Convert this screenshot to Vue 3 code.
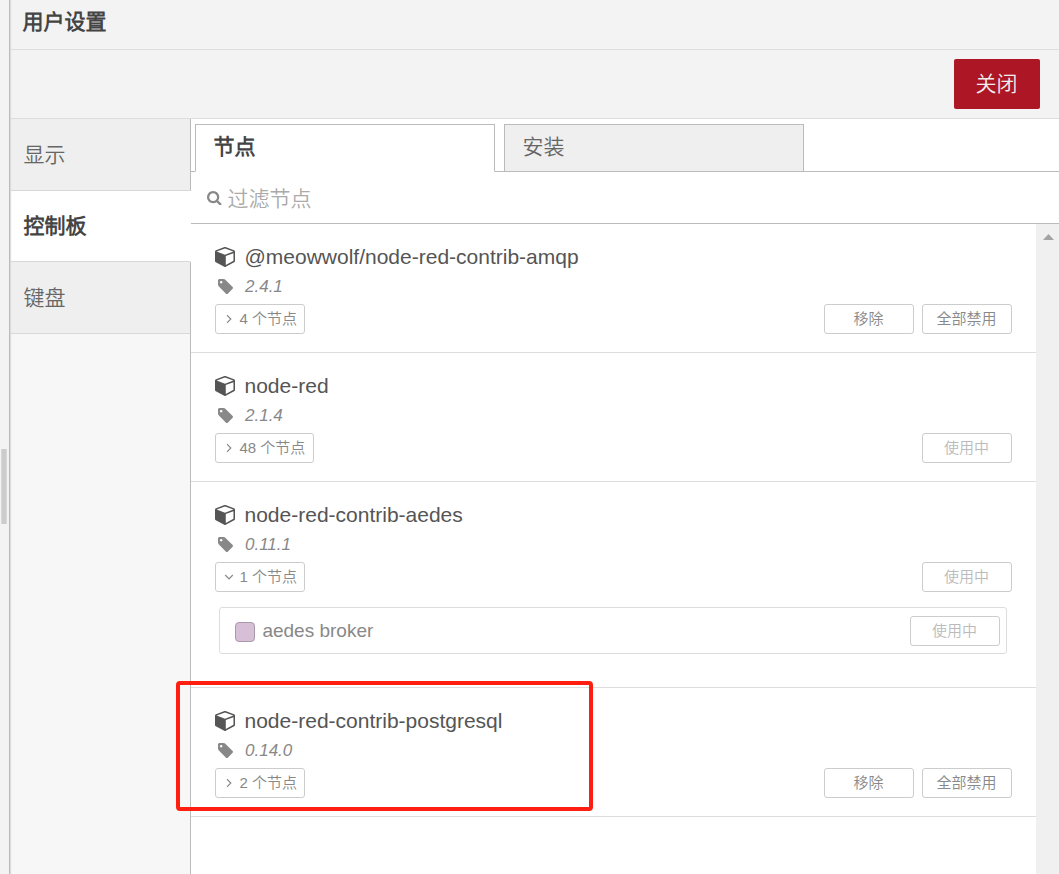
<script setup>
const menu = [
  { label: '显示', active: false },
  { label: '控制板', active: true },
  { label: '键盘', active: false },
]

const modules = [
  { name: '@meowwolf/node-red-contrib-amqp', version: '2.4.1', count: 4, actions: ['移除', '全部禁用'] },
  { name: 'node-red', version: '2.1.4', count: 48, inUse: true },
  {
    name: 'node-red-contrib-aedes',
    version: '0.11.1',
    count: 1,
    inUse: true,
    open: true,
    nodes: [{ name: 'aedes broker' }],
  },
  { name: 'node-red-contrib-postgresql', version: '0.14.0', count: 2, actions: ['移除', '全部禁用'], marked: true },
]
</script>

<template>
  <div class="app">
    <div class="separator"><span class="grip"></span></div>
    <div class="tray">
      <header class="title">用户设置</header>
      <div class="toolbar"><button class="primary">关闭</button></div>
      <div class="body">
        <nav class="menu">
          <a v-for="item in menu" :key="item.label" class="menu-item" :class="{ active: item.active }">{{ item.label }}</a>
          <div class="menu-rest"></div>
        </nav>
        <main class="content">
          <div class="tabs">
            <span class="edge"></span>
            <div class="tab active">节点</div>
            <span class="gap"></span>
            <div class="tab">安装</div>
            <span class="fill"></span>
          </div>
          <div class="search">
            <svg class="search-icon" viewBox="64 128 1664 1664"><path d="M1216 832q0-185-131.500-316.500t-316.500-131.500-316.500 131.500-131.500 316.500 131.500 316.500 316.500 131.500 316.500-131.500 131.500-316.500zm512 832q0 52-38 90t-90 38q-54 0-90-38l-343-342q-179 124-399 124-143 0-273.500-55.500t-225-150-150-225-55.500-273.500 55.500-273.500 150-225 225-150 273.500-55.500 273.500 55.500 225 150 150 225 55.500 273.500q0 220-124 399l343 343q37 37 37 90z" /></svg>
            <span>过滤节点</span>
          </div>
          <div class="scroller">
            <div class="list">
              <section v-for="m in modules" :key="m.name" class="module">
                <div class="name">
                  <svg class="cube" viewBox="0 128 1664 1664"><path d="M896 1629l640-349v-636l-640 233v752zm-64-865l698-254-698-254-698 254zm832-252v768q0 35-18 65t-49 47l-704 384q-28 16-61 16t-61-16l-704-384q-31-17-49-47t-18-65v-768q0-40 23-73t61-47l704-256q22-8 44-8t44 8l704 256q38 14 61 47t23 73z" /></svg>
                  <span>{{ m.name }}</span>
                </div>
                <div class="version">
                  <svg class="tag" viewBox="128 128 1515 1515"><path d="M576 448q0-53-37.500-90.500t-90.500-37.500-90.500 37.500-37.500 90.500 37.500 90.500 90.500 37.500 90.500-37.500 37.500-90.500zm1067 576q0 53-37 90l-491 492q-39 37-91 37-53 0-90-37l-715-716q-38-37-64.500-101t-26.500-117v-416q0-52 38-90t90-38h416q53 0 117 26.500t102 64.500l715 714q37 39 37 91z" /></svg>
                  <span>{{ m.version }}</span>
                </div>
                <div class="row">
                  <button class="btn toggle">
                    <svg class="angle" viewBox="0 0 12 12">
                      <path v-if="m.open" d="M2.200 4L6 7.800L9.800 4" />
                      <path v-else d="M4 2.200L7.800 6L4 9.800" />
                    </svg>
                    <span>{{ m.count }} 个节点</span>
                  </button>
                  <div class="actions">
                    <button v-for="a in m.actions" :key="a" class="btn">{{ a }}</button>
                    <button v-if="m.inUse" class="btn disabled">使用中</button>
                  </div>
                </div>
                <div v-if="m.nodes" class="nodes">
                  <div v-for="n in m.nodes" :key="n.name" class="node">
                    <span class="swatch"></span>
                    <span class="node-name">{{ n.name }}</span>
                    <button class="btn disabled">使用中</button>
                  </div>
                </div>
                <div v-if="m.marked" class="marker"></div>
              </section>
            </div>
            <div class="scrollbar"><span class="arrow"></span></div>
          </div>
        </main>
      </div>
    </div>
  </div>
</template>

<style>
body {
  margin: 0;
  overflow: hidden;
}
</style>

<style scoped>
* {
  box-sizing: border-box;
}
.app {
  display: flex;
  width: 1059px;
  height: 874px;
  overflow: hidden;
  background: #f3f3f3;
  font-family: "Liberation Sans", "Noto Sans CJK SC DemiLight", "Noto Sans CJK SC", sans-serif;
  font-size: 21px;
  font-weight: 350;
  color: #555;
}
svg {
  display: block;
  flex: none;
  fill: currentColor;
}
.separator {
  flex: none;
  width: 10px;
  border-right: 1px solid #bbb;
  box-shadow: 1px 0 1px #ddd;
  display: flex;
  align-items: flex-start;
  padding: 449px 0 0 1px;
  z-index: 1;
}
.grip {
  width: 6px;
  height: 75px;
  background: #ccc;
  border: 1px solid #d8d8d8;
  border-width: 0 1px;
}
.tray {
  flex: 1;
  display: flex;
  flex-direction: column;
  min-width: 0;
}
.title {
  height: 50px;
  padding-left: 12.5px;
  border-bottom: 1px solid #ddd;
  line-height: 43px;
  font-weight: 700;
  color: #444;
}
.toolbar {
  height: 69px;
  padding: 9px 19px 0 0;
  border-bottom: 1px solid #ddd;
  display: flex;
  justify-content: flex-end;
}
.primary {
  width: 86px;
  height: 50px;
  padding: 0 1px 0 0;
  border: 0;
  border-radius: 2px;
  background: #ad1625;
  color: #eee;
  font: inherit;
  line-height: 50px;
}
.body {
  flex: 1;
  display: flex;
  min-height: 0;
}
.menu {
  flex: none;
  width: 181px;
  display: flex;
  flex-direction: column;
  background: #f7f7f7;
}
.menu-item {
  height: 72px;
  padding-left: 13.5px;
  border-bottom: 1px solid #d8d8d8;
  border-right: 1px solid #bbb;
  background: #efefef;
  color: #666;
  line-height: 71px;
}
.menu-item.active {
  height: 71px;
  line-height: 70px;
  background: #fff;
  border-right-color: #fff;
  color: #444;
  font-weight: 700;
}
.menu-rest {
  flex: 1;
  border-right: 1px solid #bbb;
}
.content {
  flex: 1;
  display: flex;
  flex-direction: column;
  min-width: 0;
  background: #fff;
}
.tabs {
  display: flex;
  height: 53px;
  padding-top: 5px;
}
.edge,
.gap,
.fill {
  border-bottom: 1px solid #bbb;
}
.edge {
  width: 4px;
}
.gap {
  width: 9px;
}
.fill {
  flex: 1;
}
.tab {
  width: 300px;
  padding-left: 17.5px;
  border: 1px solid #bbb;
  background: #efefef;
  color: #666;
  line-height: 43px;
}
.tab.active {
  background: #fff;
  border-bottom-color: #fff;
  color: #444;
  font-weight: 700;
}
.search {
  height: 52px;
  padding: 1px 0 0 16px;
  border-bottom: 1px solid #bbb;
  display: flex;
  align-items: center;
  color: #aaa;
}
.search span {
  margin: 0 0 2px 6px;
}
.search-icon {
  width: 14.5px;
  height: 14.5px;
  color: #888;
}
.scroller {
  flex: 1;
  display: flex;
  min-height: 0;
}
.list {
  flex: 1;
  min-width: 0;
}
.module {
  position: relative;
  padding: 18px 24px;
  border-bottom: 1px solid #ddd;
}
.name {
  display: flex;
  align-items: center;
  height: 30px;
  line-height: 30px;
}
.cube {
  width: 20px;
  height: 20px;
  margin-right: 9.5px;
}
.version {
  display: flex;
  align-items: center;
  height: 28px;
  padding-left: 3px;
  font-size: 17px;
  font-style: italic;
  color: #888;
}
.version span {
  margin-top: 2px;
}
.tag {
  width: 15px;
  height: 15px;
  margin-right: 12px;
}
.row {
  display: flex;
  justify-content: space-between;
  margin-top: 4px;
}
.actions {
  display: flex;
  gap: 8px;
}
.btn {
  display: flex;
  align-items: center;
  justify-content: center;
  width: 90px;
  height: 30px;
  padding: 0 1px 1px 0;
  border: 1px solid #ccc;
  border-radius: 3px;
  background: #fff;
  color: #888;
  font: inherit;
  font-size: 15px;
  line-height: 28px;
  white-space: nowrap;
}
.toggle {
  width: auto;
  padding: 0 7.400px 1px 7px;
}
.angle {
  width: 12px;
  height: 12px;
  margin-right: 4.4px;
  fill: none;
  stroke: currentColor;
  stroke-width: 1.2;
}
.disabled {
  color: #bbb;
}
.nodes {
  padding: 15px 5px 15px 4px;
}
.node {
  display: flex;
  align-items: center;
  height: 47px;
  padding: 0 6px 0 15px;
  border: 1px solid #ddd;
  border-radius: 3px;
}
.node .btn {
  padding-bottom: 0;
}
.swatch {
  width: 20px;
  height: 20px;
  margin-top: 3px;
  border: 1px solid #aa98ab;
  border-radius: 4px;
  background: #d8bfd8;
}
.node-name {
  flex: 1;
  margin-left: 7.4px;
  font-size: 19px;
  color: #888;
}
.marker {
  position: absolute;
  left: -15px;
  top: -7px;
  width: 417px;
  height: 130px;
  border: 4px solid #ff1e10;
  border-radius: 4px;
}
.scrollbar {
  flex: none;
  width: 23px;
  padding: 10px 0 0 7px;
  background: #f0f0f0;
}
.arrow {
  display: block;
  width: 11px;
  height: 6px;
  background: #a3a3a3;
  clip-path: polygon(50% 0, 100% 100%, 0 100%);
}
</style>
